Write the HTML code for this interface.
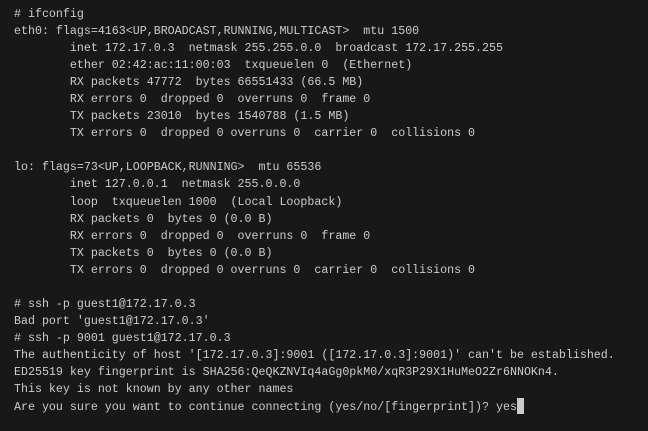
<!DOCTYPE html>
<html><head><meta charset="utf-8"><style>
html,body{margin:0;padding:0;background:#181818;width:648px;height:431px;overflow:hidden}
pre{margin:0;position:absolute;left:14px;top:6px;font-family:"Liberation Mono",monospace;font-size:11.65px;line-height:17.04px;color:#cccccc;white-space:pre}
.cur{display:inline-block;width:7px;height:16px;background:#cccccc;vertical-align:-4px}
</style></head><body><pre># ifconfig
eth0: flags=4163&lt;UP,BROADCAST,RUNNING,MULTICAST&gt;  mtu 1500
        inet 172.17.0.3  netmask 255.255.0.0  broadcast 172.17.255.255
        ether 02:42:ac:11:00:03  txqueuelen 0  (Ethernet)
        RX packets 47772  bytes 66551433 (66.5 MB)
        RX errors 0  dropped 0  overruns 0  frame 0
        TX packets 23010  bytes 1540788 (1.5 MB)
        TX errors 0  dropped 0 overruns 0  carrier 0  collisions 0

lo: flags=73&lt;UP,LOOPBACK,RUNNING&gt;  mtu 65536
        inet 127.0.0.1  netmask 255.0.0.0
        loop  txqueuelen 1000  (Local Loopback)
        RX packets 0  bytes 0 (0.0 B)
        RX errors 0  dropped 0  overruns 0  frame 0
        TX packets 0  bytes 0 (0.0 B)
        TX errors 0  dropped 0 overruns 0  carrier 0  collisions 0

# ssh -p guest1@172.17.0.3
Bad port 'guest1@172.17.0.3'
# ssh -p 9001 guest1@172.17.0.3
The authenticity of host '[172.17.0.3]:9001 ([172.17.0.3]:9001)' can't be established.
ED25519 key fingerprint is SHA256:QeQKZNVIq4aGg0pkM0/xqR3P29X1HuMeO2Zr6NNOKn4.
This key is not known by any other names
Are you sure you want to continue connecting (yes/no/[fingerprint])? yes<span class="cur"></span></pre></body></html>
